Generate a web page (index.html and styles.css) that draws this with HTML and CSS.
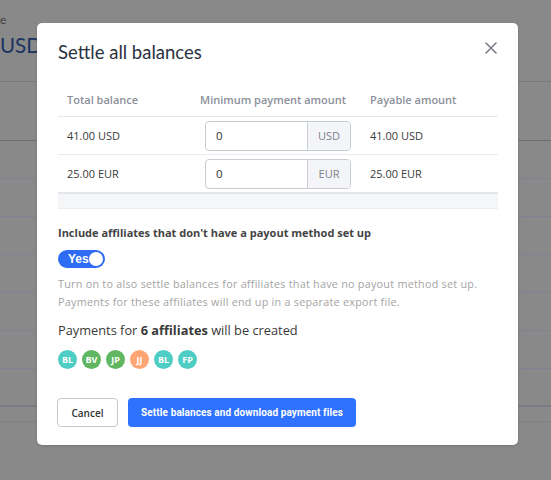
FILE: index.html
```html
<!DOCTYPE html>
<html>
<head>
<meta charset="utf-8">
<link rel="stylesheet" href="styles.css">
</head>
<body>
<div class="page">
  <div class="page-head">
    <div class="page-label">e</div>
    <div class="page-amount">USD</div>
  </div>
  <div class="page-sub"></div>
  <div class="page-row"></div>
  <div class="page-row"></div>
  <div class="page-row"></div>
  <div class="page-row"></div>
  <div class="page-row"></div>
  <div class="page-row"></div>
  <div class="page-row dark"></div>
  <div class="page-foot"></div>
</div>

<div class="modal">
  <div class="modal-head">
    <h1 class="modal-title">Settle all balances</h1>
    <button class="close" aria-label="Close">
      <svg width="12" height="12" viewBox="0 0 12 12"><path d="M1 1L11 11M11 1L1 11" stroke="#7b7e86" stroke-width="1.6" stroke-linecap="round"/></svg>
    </button>
  </div>

  <div class="table">
    <div class="tr th">
      <div class="c1">Total balance</div>
      <div class="c2">Minimum payment amount</div>
      <div class="c3">Payable amount</div>
    </div>
    <div class="tr">
      <div class="c1">41.00 USD</div>
      <div class="c2"><div class="ig"><span class="ig-val">0</span><span class="ig-add">USD</span></div></div>
      <div class="c3">41.00 USD</div>
    </div>
    <div class="tr">
      <div class="c1">25.00 EUR</div>
      <div class="c2"><div class="ig"><span class="ig-val">0</span><span class="ig-add">EUR</span></div></div>
      <div class="c3">25.00 EUR</div>
    </div>
    <div class="tfoot"></div>
  </div>

  <div class="opt-label">Include affiliates that don't have a payout method set up</div>
  <div class="toggle"><span class="toggle-text">Yes</span><span class="knob"></span></div>
  <p class="help">Turn on to also settle balances for affiliates that have no payout method set up.<br>Payments for these affiliates will end up in a separate export file.</p>
  <p class="summary">Payments for <b>6 affiliates</b> will be created</p>
  <div class="avatars">
    <span class="av teal">BL</span>
    <span class="av green">BV</span>
    <span class="av green">JP</span>
    <span class="av orange">JJ</span>
    <span class="av teal">BL</span>
    <span class="av teal">FP</span>
  </div>
  <div class="actions">
    <button class="btn btn-cancel">Cancel</button>
    <button class="btn btn-primary">Settle balances and download payment files</button>
  </div>
</div>
</body>
</html>
```
FILE: styles.css
```css
* { box-sizing: border-box; }
html, body { margin: 0; padding: 0; }
body {
  width: 551px;
  height: 480px;
  overflow: hidden;
  background: #898989;
  font-family: "Open Sans", "Liberation Sans", sans-serif;
  position: relative;
}
.page { width: 551px; }
.page-head {
  height: 82px;
  padding-top: 12px;
  border-bottom: 1px solid #7a7a7a;
}
.page-label {
  font-family: "Lato", sans-serif;
  font-size: 12px;
  color: #3e3e3e;
  height: 20px;
  line-height: 16px;
}
.page-amount {
  font-family: "Lato", sans-serif;
  font-size: 20.5px;
  line-height: 26px;
  color: #1c3362;
}
.page-sub {
  height: 59px;
  border-bottom: 1px solid #6f6f6f;
}
.page-row {
  height: 38px;
  border-bottom: 1px solid #808290;
}
.page-row.dark { border-bottom: 2px solid #7a7b85; }
.page-foot { height: 15px; border-bottom: 1px solid #7d7e86; }

.modal {
  position: absolute;
  left: 37px;
  top: 23px;
  width: 481px;
  height: 422px;
  background: #fff;
  border-radius: 5px;
  padding: 16px 20px 0 21px;
  box-shadow: 0 1px 3px rgba(0,0,0,0.15);
}
.modal-head {
  display: flex;
  justify-content: space-between;
  align-items: flex-start;
}
.modal-title {
  margin: 0;
  font-family: "Lato", sans-serif;
  font-weight: 400;
  font-size: 18.5px;
  line-height: 26px;
  color: #2a3142;
}
.close {
  border: 0;
  background: none;
  padding: 0;
  margin: 3px 1px 0 0;
  width: 12px;
  height: 12px;
  display: flex;
}

.table { margin-top: 18px; }
.tr {
  display: flex;
  align-items: center;
  height: 38px;
  border-bottom: 1px solid #e9ebf0;
  font-size: 11px;
  color: #3a3a3a;
}
.tr.th {
  height: 34px;
  font-weight: 600;
  color: #8c909a;
  border-bottom: 1px solid #e6e8ee;
}
.c1 { width: 133px; padding-left: 9px; }
.c2 { width: 170px; padding-left: 9px; }
.c3 { flex: 1; padding-left: 9px; }
.tr .c2 .ig { margin-left: 5px; }
.ig {
  display: flex;
  width: 146px;
  height: 30px;
  border: 1px solid #c9ccd3;
  border-radius: 4px;
  overflow: hidden;
}
.ig-val {
  flex: 1;
  padding-left: 10px;
  line-height: 28px;
  color: #333;
  font-size: 11.5px;
}
.ig-add {
  width: 43px;
  border-left: 1px solid #c9ccd3;
  background: #f4f5f9;
  color: #7d818b;
  text-align: center;
  line-height: 28px;
  font-size: 11px;
}
.tfoot {
  height: 17px;
  background: #f5f6f8;
  border-top: 2px solid #e4e6eb;
  border-bottom: 1px solid #eceef2;
  margin-top: -1px;
}

.opt-label {
  margin-top: 16px;
  font-size: 11px;
  font-weight: 700;
  color: #444;
  line-height: 15px;
}
.toggle {
  margin-top: 10px;
  width: 47px;
  height: 18px;
  border-radius: 9px;
  background: #2f6cf6;
  display: flex;
  align-items: center;
  padding: 0 2px 0 10px;
  justify-content: space-between;
}
.toggle-text {
  font-family: "Liberation Sans", Arial, sans-serif;
  font-weight: 700;
  font-size: 12px;
  color: #fff;
}
.knob {
  width: 14px;
  height: 14px;
  border-radius: 50%;
  background: #fff;
}
.help {
  margin: 7px 0 0;
  font-size: 10.8px;
  letter-spacing: 0.25px;
  line-height: 18px;
  color: #a4a4a4;
  white-space: nowrap;
}
.summary {
  margin: 10px 0 0;
  font-size: 12.8px;
  line-height: 18px;
  color: #3a3a3a;
}
.summary b { font-weight: 700; }
.avatars {
  display: flex;
  gap: 5px;
  margin-top: 11px;
}
.av {
  width: 19px;
  height: 19px;
  border-radius: 50%;
  display: flex;
  align-items: center;
  justify-content: center;
  font-size: 9px;
  font-weight: 700;
  color: #fff;
}
.av.teal { background: #4ecdc4; }
.av.green { background: #61b761; }
.av.orange { background: #ffa574; }

.actions {
  display: flex;
  gap: 10px;
  margin-top: 29px;
}
.btn {
  height: 29px;
  border-radius: 4px;
  font-family: "Open Sans", sans-serif;
  font-size: 10px;
  font-weight: 600;
  cursor: pointer;
  white-space: nowrap;
  padding: 0;
}
.btn-cancel {
  width: 61px;
  margin-left: -1px;
  background: #fff;
  border: 1px solid #c6c8cd;
  color: #333;
}
.btn-primary {
  width: 228px;
  background: #2f72ff;
  border: 0;
  color: #fff;
  font-family: "Roboto", sans-serif;
  font-weight: 700;
  font-size: 10px;
  letter-spacing: 0.1px;
}
```
